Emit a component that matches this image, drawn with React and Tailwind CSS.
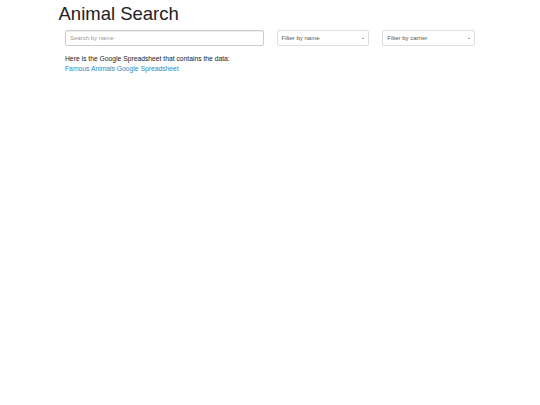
export default function App() {
  return (
    <div className="min-h-[405px] bg-white font-['Liberation_Sans',Arial,sans-serif] text-[#333]">
      <div className="w-[423px] mx-auto">
        <h1 className="text-[18.5px] leading-[20px] pt-[4px] mb-[6px] text-[#222]">Animal Search</h1>
        <div className="flex items-start">
          <div className="w-[211.5px] px-[6.5px]">
            <input
              className="block w-full h-[16px] border border-[#ccc] rounded-[2px] px-[4px] text-[6px] shadow-[inset_0_1px_1px_rgba(0,0,0,0.075)] placeholder:text-[#999] outline-none"
              placeholder="Search by name"
            />
          </div>
          <div className="w-[105.75px] px-[6.5px]">
            <div className="h-[16px] border border-[#ddd] rounded-[2px] flex items-center justify-between px-[4px] text-[6px] text-[#555] bg-white">
              <span>Filter by name</span>
              <span className="w-0 h-0 border-l-[1.5px] border-r-[1.5px] border-t-[1.5px] border-l-transparent border-r-transparent border-t-[#444]" />
            </div>
          </div>
          <div className="w-[105.75px] px-[6.5px]">
            <div className="h-[16px] border border-[#ddd] rounded-[2px] flex items-center justify-between px-[4px] text-[6px] text-[#555] bg-white">
              <span>Filter by carrier</span>
              <span className="w-0 h-0 border-l-[1.5px] border-r-[1.5px] border-t-[1.5px] border-l-transparent border-r-transparent border-t-[#444]" />
            </div>
          </div>
        </div>
        <div className="px-[6.5px] mt-[8px] text-[6.75px] leading-[10px]">
          <p className="text-[#222]">Here is the Google Spreadsheet that contains the data:</p>
          <a href="#" className="text-[#2a8bbf]">Famous Animals Google Spreadsheet</a>
        </div>
      </div>
    </div>
  );
}
